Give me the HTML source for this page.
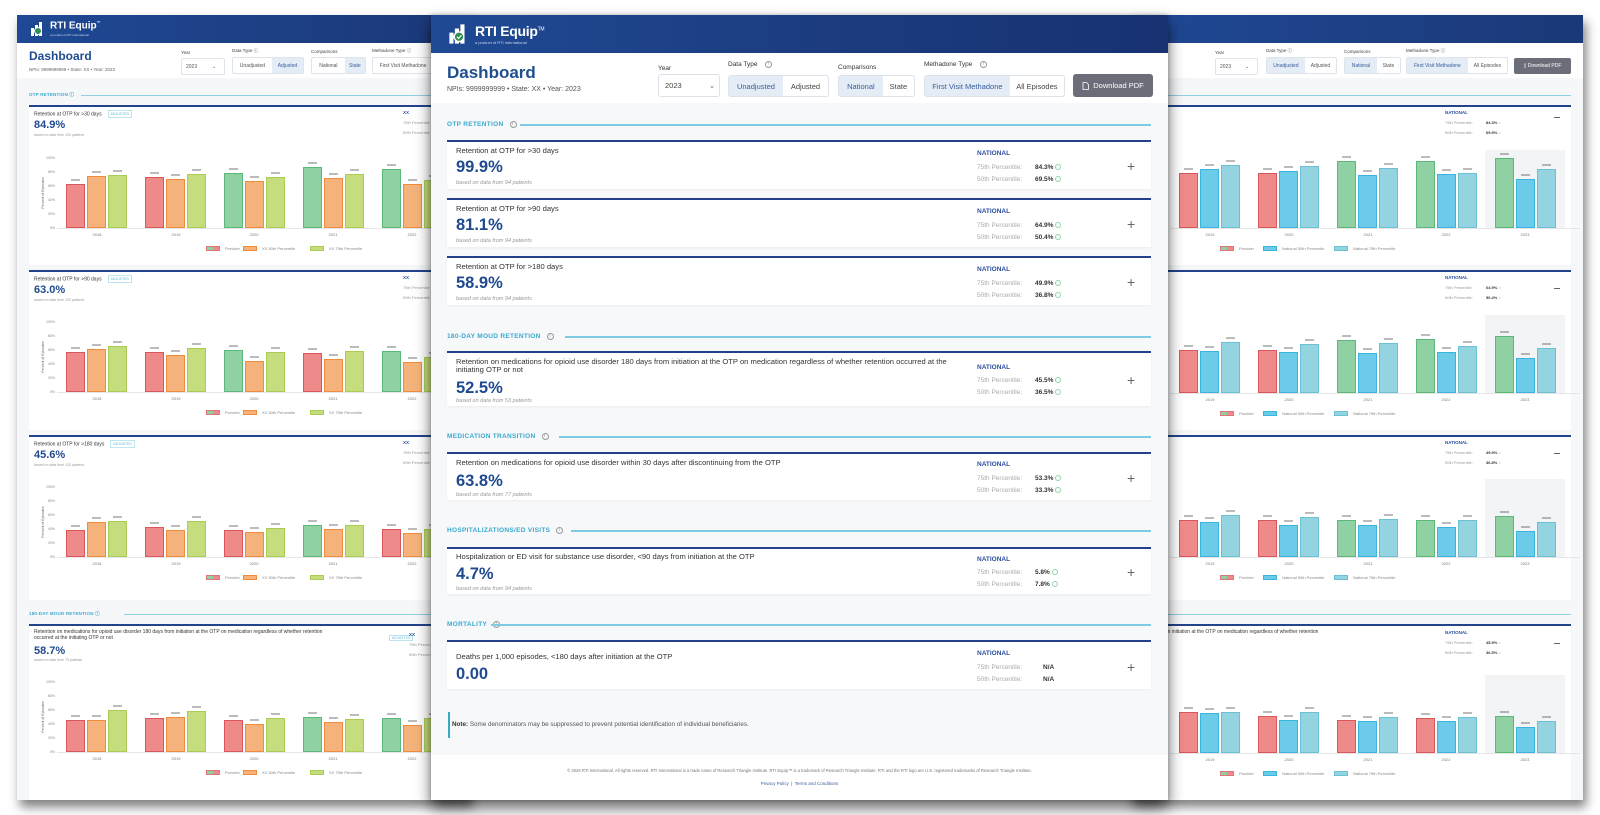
<!DOCTYPE html>
<html><head><meta charset="utf-8">
<style>
*{box-sizing:border-box;margin:0;padding:0}
body{width:1600px;height:815px;background:#fff;position:relative;overflow:hidden;font-family:"Liberation Sans",sans-serif;color:#333}
.abs{position:absolute}
.bc{position:absolute;top:15px;width:453px;height:785px;background:#f5f7f9;box-shadow:3px 7px 10px rgba(0,0,0,.5);overflow:hidden}
.hd{position:absolute;left:0;top:0;right:0;height:28px;background:linear-gradient(90deg,#1f4995,#1b3877)}
.wh{position:absolute;left:0;top:28px;right:0;height:35px;background:#fff}
.kc{position:absolute;left:12px;width:429px;background:#fff;border-top:2px solid #23438a}
.sl{position:absolute;font-size:4.5px;font-weight:bold;color:#3aaad0;letter-spacing:.2px;white-space:nowrap}
.ln{position:absolute;height:1px;background:#8fd0e3}
.yr{position:absolute;font-size:4px;color:#777;transform:translateX(-50%);white-space:nowrap}
.bar{position:absolute;width:19px;border:1px solid}
.lg{position:absolute;font-size:4px;color:#888;white-space:nowrap}
.sw{display:inline-block;width:14px;height:5px;vertical-align:middle;margin-right:5px;border:1px solid}
.tt{position:absolute;font-size:5px;color:#333;white-space:nowrap;line-height:6px}
.vv{position:absolute;font-size:11px;font-weight:bold;color:#1f4a8f;line-height:12px}
.ss{position:absolute;font-size:3.5px;color:#999;font-style:italic;white-space:nowrap}
.tg{display:inline-block;border:1px solid #bfe3ef;color:#5bb9d9;font-size:3.5px;padding:0 2px;margin-left:6px;vertical-align:middle}
.sm{position:absolute;font-size:4px;color:#999;white-space:nowrap}
.smb{position:absolute;font-size:4px;color:#333;font-weight:bold;white-space:nowrap}
.nat{position:absolute;font-size:4.5px;color:#2d4f9e;font-weight:bold}
.ctl{position:absolute;height:17px;border:1px solid #dfe3ea;border-radius:2px;background:#fff;display:flex;font-size:5px;color:#555}
.ctl span{display:flex;align-items:center;justify-content:center;height:100%}
.hi{background:#e4ecf6;color:#3a5d9c}
.cl{position:absolute;font-size:4.5px;color:#444;white-space:nowrap}
.ax{position:absolute;font-size:3.5px;color:#888;text-align:right;width:12px}
#C{position:absolute;left:431px;top:15px;width:737px;height:785px;background:#f6f8fa;box-shadow:0 8px 14px rgba(0,0,0,.6),0 0 4px rgba(0,0,0,.2);z-index:5;overflow:hidden}
#C .hdr{position:absolute;left:0;top:0;width:737px;height:38px;background:linear-gradient(90deg,#1f4a94,#1b3a7c 60%,#183272)}
#C .wt{position:absolute;left:0;top:38px;width:737px;height:50px;background:#fff}
.lab{position:absolute;font-size:6.5px;color:#333;white-space:nowrap;line-height:8px}
.seg{position:absolute;top:60px;height:22px;border:1px solid #dde2ea;border-radius:3px;background:#fff;display:flex;font-size:7.5px;color:#444;overflow:hidden}
.seg span{display:flex;align-items:center;justify-content:center;height:100%}
.sec{position:absolute;left:16px;font-size:6.5px;font-weight:bold;color:#3aa9cf;letter-spacing:.3px;white-space:nowrap;line-height:8px}
.sln{position:absolute;height:1.5px;background:#7fcbe2;right:17px}
.cc{position:absolute;left:16px;width:704px;background:#fff;border-top:2.5px solid #22418a;box-shadow:0 1px 2px rgba(0,0,0,.05)}
.ct{position:absolute;left:9px;font-size:7.6px;color:#333;line-height:8px;white-space:nowrap}
.cv{position:absolute;left:9px;font-size:16.5px;font-weight:bold;color:#1f4a8f;line-height:16px}
.cs{position:absolute;left:9px;font-size:5.5px;color:#999;font-style:italic;line-height:6px;white-space:nowrap}
.cn{position:absolute;left:530px;font-size:6.5px;font-weight:bold;color:#2d4f9e;line-height:8px}
.cp{position:absolute;left:530px;font-size:6.5px;color:#aaa;line-height:8px;white-space:nowrap}
.cpv{position:absolute;left:588px;font-size:6.5px;font-weight:bold;color:#333;line-height:8px;white-space:nowrap}
.ck{display:inline-block;width:6px;height:6px;border:1px solid #8fd4a5;border-radius:50%;margin-left:2px;vertical-align:-1px}
.pl{position:absolute;left:680px;font-size:14px;color:#666;line-height:14px;font-weight:300}
.ii{display:inline-block;width:7px;height:7px;border:1px solid #999;border-radius:50%;font-size:5px;line-height:5px;text-align:center;color:#999;margin-left:6px;font-weight:normal;vertical-align:middle}
</style></head><body>

<div class="bc" id="L" style="left:17px">
 <div class="hd"></div>
 <svg class="abs" style="left:13px;top:6px" width="16" height="16" viewBox="0 0 16 16"><rect x="1" y="7" width="3" height="8" fill="#fff"/><rect x="5" y="4" width="3" height="11" fill="#fff"/><rect x="9" y="1" width="3" height="14" fill="#fff"/><circle cx="8" cy="10" r="3.5" fill="#2f8f4e" stroke="#fff" stroke-width="1"/></svg>
 <div class="abs" style="left:33px;top:5px;color:#fff;font-size:10px;font-weight:bold">RTI Equip<sup style="font-size:4px">™</sup></div>
 <div class="abs" style="left:33px;top:18px;color:#cdd8ee;font-size:3px">a product of RTI International</div>
 <div class="wh"></div>
 <div class="abs" style="left:12px;top:34px;font-size:12px;font-weight:bold;color:#1f4a8f">Dashboard</div>
 <div class="abs" style="left:12px;top:52px;font-size:4.5px;color:#666">NPIs: 9999999999 • State: XX • Year: 2023</div>
 <div class="cl" style="left:164px;top:35px">Year</div>
 <div class="ctl" style="left:164px;top:43px;width:44px"><span style="width:30px;justify-content:flex-start;padding-left:4px">2023</span><span>⌄</span></div>
 <div class="cl" style="left:215px;top:33px">Data Type ⓘ</div>
 <div class="ctl" style="left:215px;top:42px;width:72px"><span style="width:40px">Unadjusted</span><span class="hi" style="width:32px">Adjusted</span></div>
 <div class="cl" style="left:294px;top:34px">Comparisons</div>
 <div class="ctl" style="left:294px;top:42px;width:55px"><span style="width:34px">National</span><span class="hi" style="width:21px">State</span></div>
 <div class="cl" style="left:355px;top:33px">Methadone Type ⓘ</div>
 <div class="ctl" style="left:355px;top:42px;width:100px"><span style="width:60px">First Visit Methadone</span></div>
 <div class="sl" style="left:12px;top:77px">OTP RETENTION ⓘ</div>
 <div class="ln" style="left:64px;right:0;top:80px"></div>

 <div class="kc" style="top:90px;height:160px"></div>
 <div class="tt" style="left:17px;top:95px">Retention at OTP for &gt;30 days<span class="tg">ADJUSTED</span></div>
 <div class="vv" style="left:17px;top:104px">84.9%</div>
 <div class="ss" style="left:17px;top:118px">based on data from 125 patients</div>
 <div class="nat" style="left:386px;top:95px">XX</div><div class="sm" style="left:386px;top:105px">75th Percentile</div><div class="sm" style="left:386px;top:115px">50th Percentile</div>

 <div class="kc" style="top:255px;height:160px"></div>
 <div class="tt" style="left:17px;top:260px">Retention at OTP for &gt;90 days<span class="tg">ADJUSTED</span></div>
 <div class="vv" style="left:17px;top:269px">63.0%</div>
 <div class="ss" style="left:17px;top:283px">based on data from 125 patients</div>
 <div class="nat" style="left:386px;top:260px">XX</div><div class="sm" style="left:386px;top:270px">75th Percentile</div><div class="sm" style="left:386px;top:280px">50th Percentile</div>

 <div class="kc" style="top:420px;height:165px"></div>
 <div class="tt" style="left:17px;top:425px">Retention at OTP for &gt;180 days<span class="tg">ADJUSTED</span></div>
 <div class="vv" style="left:17px;top:434px">45.6%</div>
 <div class="ss" style="left:17px;top:448px">based on data from 125 patients</div>
 <div class="nat" style="left:386px;top:425px">XX</div><div class="sm" style="left:386px;top:435px">75th Percentile</div><div class="sm" style="left:386px;top:445px">50th Percentile</div>

 <div class="sl" style="left:12px;top:596px">180-DAY MOUD RETENTION ⓘ</div>
 <div class="ln" style="left:107px;right:0;top:599px"></div>
 <div class="kc" style="top:609px;height:176px"></div>
 <div class="tt" style="left:17px;top:614px">Retention on medications for opioid use disorder 180 days from initiation at the OTP on medication regardless of whether retention<br>occurred at the initiating OTP or not</div>
 <div class="abs" style="left:366px;top:614px"><span class="tg">ADJUSTED</span></div>
 <div class="vv" style="left:17px;top:630px">58.7%</div>
 <div class="ss" style="left:17px;top:643px">based on data from 75 patients</div>
 <div class="nat" style="left:392px;top:617px">XX</div><div class="sm" style="left:392px;top:627px">75th Percentile</div><div class="sm" style="left:392px;top:637px">50th Percentile</div>

 <div id="lc1" class="abs" style="left:0;top:143px;width:453px;height:100px">
  <div class="ax" style="left:26px;top:-2px">100%</div><div class="ax" style="left:26px;top:12px">80%</div><div class="ax" style="left:26px;top:26px">60%</div><div class="ax" style="left:26px;top:40px">40%</div><div class="ax" style="left:26px;top:54px">20%</div><div class="ax" style="left:26px;top:68px">0%</div>
  <div class="abs" style="left:6px;top:33px;font-size:3.5px;color:#666;transform:rotate(-90deg);white-space:nowrap;width:40px;text-align:center">Percent of Episodes</div>
  <div class="yr" style="left:80px;top:74px">2018</div><div class="yr" style="left:159px;top:74px">2019</div><div class="yr" style="left:237px;top:74px">2020</div><div class="yr" style="left:316px;top:74px">2021</div><div class="yr" style="left:395px;top:74px">2022</div>
  <div class="lg" style="left:189px;top:88px"><i class="sw" style="background:linear-gradient(90deg,#8fd1a3 50%,#ee8a8a 50%);border-color:#d77"></i>Provider</div>
  <div class="lg" style="left:226px;top:88px"><i class="sw" style="background:#f5b27a;border-color:#f08c3c"></i>XX 50th Percentile</div>
  <div class="lg" style="left:293px;top:88px"><i class="sw" style="background:#c5dd7c;border-color:#a8cc55"></i>XX 75th Percentile</div>
 </div>
 <div id="lc2" class="abs" style="left:0;top:307px;width:453px;height:100px">
  <div class="ax" style="left:26px;top:-2px">100%</div><div class="ax" style="left:26px;top:12px">80%</div><div class="ax" style="left:26px;top:26px">60%</div><div class="ax" style="left:26px;top:40px">40%</div><div class="ax" style="left:26px;top:54px">20%</div><div class="ax" style="left:26px;top:68px">0%</div>
  <div class="abs" style="left:6px;top:33px;font-size:3.5px;color:#666;transform:rotate(-90deg);white-space:nowrap;width:40px;text-align:center">Percent of Episodes</div>
  <div class="yr" style="left:80px;top:74px">2018</div><div class="yr" style="left:159px;top:74px">2019</div><div class="yr" style="left:237px;top:74px">2020</div><div class="yr" style="left:316px;top:74px">2021</div><div class="yr" style="left:395px;top:74px">2022</div>
  <div class="lg" style="left:189px;top:88px"><i class="sw" style="background:linear-gradient(90deg,#8fd1a3 50%,#ee8a8a 50%);border-color:#d77"></i>Provider</div>
  <div class="lg" style="left:226px;top:88px"><i class="sw" style="background:#f5b27a;border-color:#f08c3c"></i>XX 50th Percentile</div>
  <div class="lg" style="left:293px;top:88px"><i class="sw" style="background:#c5dd7c;border-color:#a8cc55"></i>XX 75th Percentile</div>
 </div>
 <div id="lc3" class="abs" style="left:0;top:472px;width:453px;height:100px">
  <div class="ax" style="left:26px;top:-2px">100%</div><div class="ax" style="left:26px;top:12px">80%</div><div class="ax" style="left:26px;top:26px">60%</div><div class="ax" style="left:26px;top:40px">40%</div><div class="ax" style="left:26px;top:54px">20%</div><div class="ax" style="left:26px;top:68px">0%</div>
  <div class="abs" style="left:6px;top:33px;font-size:3.5px;color:#666;transform:rotate(-90deg);white-space:nowrap;width:40px;text-align:center">Percent of Episodes</div>
  <div class="yr" style="left:80px;top:74px">2018</div><div class="yr" style="left:159px;top:74px">2019</div><div class="yr" style="left:237px;top:74px">2020</div><div class="yr" style="left:316px;top:74px">2021</div><div class="yr" style="left:395px;top:74px">2022</div>
  <div class="lg" style="left:189px;top:88px"><i class="sw" style="background:linear-gradient(90deg,#8fd1a3 50%,#ee8a8a 50%);border-color:#d77"></i>Provider</div>
  <div class="lg" style="left:226px;top:88px"><i class="sw" style="background:#f5b27a;border-color:#f08c3c"></i>XX 50th Percentile</div>
  <div class="lg" style="left:293px;top:88px"><i class="sw" style="background:#c5dd7c;border-color:#a8cc55"></i>XX 75th Percentile</div>
 </div>
 <div id="lc4" class="abs" style="left:0;top:667px;width:453px;height:100px">
  <div class="ax" style="left:26px;top:-2px">100%</div><div class="ax" style="left:26px;top:12px">80%</div><div class="ax" style="left:26px;top:26px">60%</div><div class="ax" style="left:26px;top:40px">40%</div><div class="ax" style="left:26px;top:54px">20%</div><div class="ax" style="left:26px;top:68px">0%</div>
  <div class="abs" style="left:6px;top:33px;font-size:3.5px;color:#666;transform:rotate(-90deg);white-space:nowrap;width:40px;text-align:center">Percent of Episodes</div>
  <div class="yr" style="left:80px;top:74px">2018</div><div class="yr" style="left:159px;top:74px">2019</div><div class="yr" style="left:237px;top:74px">2020</div><div class="yr" style="left:316px;top:74px">2021</div><div class="yr" style="left:395px;top:74px">2022</div>
  <div class="lg" style="left:189px;top:88px"><i class="sw" style="background:linear-gradient(90deg,#8fd1a3 50%,#ee8a8a 50%);border-color:#d77"></i>Provider</div>
  <div class="lg" style="left:226px;top:88px"><i class="sw" style="background:#f5b27a;border-color:#f08c3c"></i>XX 50th Percentile</div>
  <div class="lg" style="left:293px;top:88px"><i class="sw" style="background:#c5dd7c;border-color:#a8cc55"></i>XX 75th Percentile</div>
 </div>
</div>

<div class="bc" id="R" style="left:1130px">
 <div class="hd"></div>
 <div class="wh"></div>
 <div class="cl" style="left:85px;top:35px">Year</div>
 <div class="ctl" style="left:85px;top:43px;width:43px"><span style="width:29px;justify-content:flex-start;padding-left:4px">2023</span><span>⌄</span></div>
 <div class="cl" style="left:136px;top:33px">Data Type ⓘ</div>
 <div class="ctl" style="left:136px;top:42px;width:71px"><span class="hi" style="width:39px">Unadjusted</span><span style="width:32px">Adjusted</span></div>
 <div class="cl" style="left:214px;top:34px">Comparisons</div>
 <div class="ctl" style="left:214px;top:42px;width:57px"><span class="hi" style="width:33px">National</span><span style="width:24px">State</span></div>
 <div class="cl" style="left:276px;top:33px">Methadone Type ⓘ</div>
 <div class="ctl" style="left:276px;top:42px;width:102px"><span class="hi" style="width:62px">First Visit Methadone</span><span style="width:40px">All Episodes</span></div>
 <div class="abs" style="left:384px;top:43px;width:57px;height:16px;background:#6b6e78;border-radius:2px;color:#fff;font-size:5px;display:flex;align-items:center;justify-content:center">▯ Download PDF</div>
 <div class="ln" style="left:0;width:441px;top:80px"></div>

 <div class="kc" style="top:90px;height:160px"></div>
 <div class="kc" style="top:255px;height:160px"></div>
 <div class="kc" style="top:420px;height:165px"></div>
 <div class="ln" style="left:0;width:441px;top:599px"></div>
 <div class="kc" style="top:609px;height:176px"></div>
 <div class="tt" style="left:-100px;top:614px">Retention on medications for opioid use disorder 180 days from initiation at the OTP on medication regardless of whether retention</div>

 <div class="nat" style="left:315px;top:95px">NATIONAL</div><div class="sm" style="left:315px;top:105px">75th Percentile:</div><div class="smb" style="left:356px;top:105px">84.3% ◌</div><div class="sm" style="left:315px;top:115px">50th Percentile:</div><div class="smb" style="left:356px;top:115px">69.5% ◌</div><div class="abs" style="left:424px;top:102px;width:6px;height:1px;background:#666"></div>
 <div class="nat" style="left:315px;top:260px">NATIONAL</div><div class="sm" style="left:315px;top:270px">75th Percentile:</div><div class="smb" style="left:356px;top:270px">64.9% ◌</div><div class="sm" style="left:315px;top:280px">50th Percentile:</div><div class="smb" style="left:356px;top:280px">50.4% ◌</div><div class="abs" style="left:424px;top:273px;width:6px;height:1px;background:#666"></div>
 <div class="nat" style="left:315px;top:425px">NATIONAL</div><div class="sm" style="left:315px;top:435px">75th Percentile:</div><div class="smb" style="left:356px;top:435px">49.9% ◌</div><div class="sm" style="left:315px;top:445px">50th Percentile:</div><div class="smb" style="left:356px;top:445px">36.8% ◌</div><div class="abs" style="left:424px;top:438px;width:6px;height:1px;background:#666"></div>
 <div class="nat" style="left:315px;top:615px">NATIONAL</div><div class="sm" style="left:315px;top:625px">75th Percentile:</div><div class="smb" style="left:356px;top:625px">45.5% ◌</div><div class="sm" style="left:315px;top:635px">50th Percentile:</div><div class="smb" style="left:356px;top:635px">36.5% ◌</div><div class="abs" style="left:424px;top:628px;width:6px;height:1px;background:#666"></div>

 <div id="rc1" class="abs" style="left:0;top:143px;width:453px;height:100px">
  <div class="abs" style="left:355px;top:-8px;width:80px;height:78px;background:#f2f4f5"></div>
  <div class="yr" style="left:80px;top:74px">2019</div><div class="yr" style="left:159px;top:74px">2020</div><div class="yr" style="left:238px;top:74px">2021</div><div class="yr" style="left:316px;top:74px">2022</div><div class="yr" style="left:395px;top:74px">2023</div>
  <div class="lg" style="left:90px;top:88px"><i class="sw" style="background:linear-gradient(90deg,#8fd1a3 50%,#ee8a8a 50%);border-color:#d77"></i>Provider</div>
  <div class="lg" style="left:133px;top:88px"><i class="sw" style="background:#6ccbe9;border-color:#3ab4dc"></i>National 50th Percentile</div>
  <div class="lg" style="left:204px;top:88px"><i class="sw" style="background:#94d3e0;border-color:#6cc0d4"></i>National 75th Percentile</div>
 </div>
 <div id="rc2" class="abs" style="left:0;top:308px;width:453px;height:100px">
  <div class="abs" style="left:355px;top:-8px;width:80px;height:78px;background:#f2f4f5"></div>
  <div class="yr" style="left:80px;top:74px">2019</div><div class="yr" style="left:159px;top:74px">2020</div><div class="yr" style="left:238px;top:74px">2021</div><div class="yr" style="left:316px;top:74px">2022</div><div class="yr" style="left:395px;top:74px">2023</div>
  <div class="lg" style="left:90px;top:88px"><i class="sw" style="background:linear-gradient(90deg,#8fd1a3 50%,#ee8a8a 50%);border-color:#d77"></i>Provider</div>
  <div class="lg" style="left:133px;top:88px"><i class="sw" style="background:#6ccbe9;border-color:#3ab4dc"></i>National 50th Percentile</div>
  <div class="lg" style="left:204px;top:88px"><i class="sw" style="background:#94d3e0;border-color:#6cc0d4"></i>National 75th Percentile</div>
 </div>
 <div id="rc3" class="abs" style="left:0;top:472px;width:453px;height:100px">
  <div class="abs" style="left:355px;top:-8px;width:80px;height:78px;background:#f2f4f5"></div>
  <div class="yr" style="left:80px;top:74px">2019</div><div class="yr" style="left:159px;top:74px">2020</div><div class="yr" style="left:238px;top:74px">2021</div><div class="yr" style="left:316px;top:74px">2022</div><div class="yr" style="left:395px;top:74px">2023</div>
  <div class="lg" style="left:90px;top:88px"><i class="sw" style="background:linear-gradient(90deg,#8fd1a3 50%,#ee8a8a 50%);border-color:#d77"></i>Provider</div>
  <div class="lg" style="left:133px;top:88px"><i class="sw" style="background:#6ccbe9;border-color:#3ab4dc"></i>National 50th Percentile</div>
  <div class="lg" style="left:204px;top:88px"><i class="sw" style="background:#94d3e0;border-color:#6cc0d4"></i>National 75th Percentile</div>
 </div>
 <div id="rc4" class="abs" style="left:0;top:668px;width:453px;height:100px">
  <div class="abs" style="left:355px;top:-8px;width:80px;height:78px;background:#f2f4f5"></div>
  <div class="yr" style="left:80px;top:74px">2019</div><div class="yr" style="left:159px;top:74px">2020</div><div class="yr" style="left:238px;top:74px">2021</div><div class="yr" style="left:316px;top:74px">2022</div><div class="yr" style="left:395px;top:74px">2023</div>
  <div class="lg" style="left:90px;top:88px"><i class="sw" style="background:linear-gradient(90deg,#8fd1a3 50%,#ee8a8a 50%);border-color:#d77"></i>Provider</div>
  <div class="lg" style="left:133px;top:88px"><i class="sw" style="background:#6ccbe9;border-color:#3ab4dc"></i>National 50th Percentile</div>
  <div class="lg" style="left:204px;top:88px"><i class="sw" style="background:#94d3e0;border-color:#6cc0d4"></i>National 75th Percentile</div>
 </div>
</div>

<div id="C">
 <div class="hdr"></div>
 <svg class="abs" style="left:17px;top:8px" width="22" height="22" viewBox="0 0 16 16"><rect x="1" y="7" width="3" height="8" fill="#fff"/><rect x="5" y="4" width="3" height="11" fill="#fff"/><rect x="9" y="1" width="3" height="14" fill="#fff"/><circle cx="8" cy="10" r="3.5" fill="#2f8f4e" stroke="#fff" stroke-width="1"/><path d="M6.5 10l1.2 1.2 2-2.2" stroke="#fff" stroke-width=".8" fill="none"/></svg>
 <div class="abs" style="left:44px;top:8px;color:#fff;font-size:14px;font-weight:bold;letter-spacing:-.3px">RTI Equip<sup style="font-size:5px;font-weight:normal">TM</sup></div>
 <div class="abs" style="left:44px;top:25px;color:#c9d5ec;font-size:4px">a product of RTI International</div>
 <div class="wt"></div>
 <div class="abs" style="left:16px;top:48px;font-size:17px;font-weight:bold;color:#1f4e8f">Dashboard</div>
 <div class="abs" style="left:16px;top:71px;font-size:7px;color:#555">NPIs: 9999999999 • State: XX • Year: 2023</div>

 <div class="lab" style="left:227px;top:50px">Year</div>
 <div class="seg" style="left:227px;top:59px;width:62px;height:23px"><span style="width:46px;justify-content:flex-start;padding-left:6px">2023</span><span style="width:14px;color:#666">⌄</span></div>
 <div class="lab" style="left:297px;top:46px">Data Type <span class="ii">i</span></div>
 <div class="seg" style="left:297px;width:101px"><span class="hi" style="width:55px">Unadjusted</span><span style="width:46px">Adjusted</span></div>
 <div class="lab" style="left:407px;top:49px">Comparisons</div>
 <div class="seg" style="left:407px;width:77px"><span class="hi" style="width:45px">National</span><span style="width:32px">State</span></div>
 <div class="lab" style="left:493px;top:46px">Methadone Type <span class="ii">i</span></div>
 <div class="seg" style="left:493px;width:141px"><span class="hi" style="width:86px">First Visit Methadone</span><span style="width:55px">All Episodes</span></div>
 <div class="abs" style="left:642px;top:59px;width:80px;height:23px;background:#6b6e78;border-radius:3px;color:#fff;font-size:7.5px;display:flex;align-items:center;justify-content:center"><svg width="7" height="8" viewBox="0 0 7 8" style="margin-right:4px"><path d="M1 .5h3.5L6.5 2.5v5H1z" fill="none" stroke="#fff" stroke-width=".8"/></svg>Download PDF</div>

 <div class="sec" style="top:106px">OTP RETENTION<span class="ii">i</span></div>
 <div class="sln" style="left:89px;top:109px"></div>
 <div class="cc" style="top:125px;height:49px">
  <div class="ct" style="top:5px">Retention at OTP for &gt;30 days</div><div class="cv" style="top:17px">99.9%</div><div class="cs" style="top:38px">based on data from 94 patients</div>
  <div class="cn" style="top:8px">NATIONAL</div><div class="cp" style="top:22px">75th Percentile:</div><div class="cpv" style="top:22px">84.3%<i class="ck"></i></div><div class="cp" style="top:34px">50th Percentile:</div><div class="cpv" style="top:34px">69.5%<i class="ck"></i></div><div class="pl" style="top:17px">+</div>
 </div>
 <div class="cc" style="top:183px;height:49px">
  <div class="ct" style="top:5px">Retention at OTP for &gt;90 days</div><div class="cv" style="top:17px">81.1%</div><div class="cs" style="top:38px">based on data from 94 patients</div>
  <div class="cn" style="top:8px">NATIONAL</div><div class="cp" style="top:22px">75th Percentile:</div><div class="cpv" style="top:22px">64.9%<i class="ck"></i></div><div class="cp" style="top:34px">50th Percentile:</div><div class="cpv" style="top:34px">50.4%<i class="ck"></i></div><div class="pl" style="top:17px">+</div>
 </div>
 <div class="cc" style="top:241px;height:49px">
  <div class="ct" style="top:5px">Retention at OTP for &gt;180 days</div><div class="cv" style="top:17px">58.9%</div><div class="cs" style="top:38px">based on data from 94 patients</div>
  <div class="cn" style="top:8px">NATIONAL</div><div class="cp" style="top:22px">75th Percentile:</div><div class="cpv" style="top:22px">49.9%<i class="ck"></i></div><div class="cp" style="top:34px">50th Percentile:</div><div class="cpv" style="top:34px">36.8%<i class="ck"></i></div><div class="pl" style="top:17px">+</div>
 </div>

 <div class="sec" style="top:318px">180-DAY MOUD RETENTION<span class="ii">i</span></div>
 <div class="sln" style="left:134px;top:321px"></div>
 <div class="cc" style="top:336px;height:55px">
  <div class="ct" style="top:5px">Retention on medications for opioid use disorder 180 days from initiation at the OTP on medication regardless of whether retention occurred at the<br>initiating OTP or not</div>
  <div class="cv" style="top:27px">52.5%</div><div class="cs" style="top:45px">based on data from 53 patients</div>
  <div class="cn" style="top:11px">NATIONAL</div><div class="cp" style="top:24px">75th Percentile:</div><div class="cpv" style="top:24px">45.5%<i class="ck"></i></div><div class="cp" style="top:36px">50th Percentile:</div><div class="cpv" style="top:36px">36.5%<i class="ck"></i></div><div class="pl" style="top:20px">+</div>
 </div>

 <div class="sec" style="top:418px">MEDICATION TRANSITION<span class="ii">i</span></div>
 <div class="sln" style="left:128px;top:421px"></div>
 <div class="cc" style="top:437px;height:48px">
  <div class="ct" style="top:5px">Retention on medications for opioid use disorder within 30 days after discontinuing from the OTP</div>
  <div class="cv" style="top:19px">63.8%</div><div class="cs" style="top:38px">based on data from 77 patients</div>
  <div class="cn" style="top:7px">NATIONAL</div><div class="cp" style="top:21px">75th Percentile:</div><div class="cpv" style="top:21px">53.3%<i class="ck"></i></div><div class="cp" style="top:33px">50th Percentile:</div><div class="cpv" style="top:33px">33.3%<i class="ck"></i></div><div class="pl" style="top:17px">+</div>
 </div>

 <div class="sec" style="top:512px">HOSPITALIZATIONS/ED VISITS<span class="ii">i</span></div>
 <div class="sln" style="left:140px;top:515px"></div>
 <div class="cc" style="top:532px;height:47px">
  <div class="ct" style="top:4px">Hospitalization or ED visit for substance use disorder, &lt;90 days from initiation at the OTP</div>
  <div class="cv" style="top:17px">4.7%</div><div class="cs" style="top:37px">based on data from 94 patients</div>
  <div class="cn" style="top:7px">NATIONAL</div><div class="cp" style="top:20px">75th Percentile:</div><div class="cpv" style="top:20px">5.8%<i class="ck"></i></div><div class="cp" style="top:32px">50th Percentile:</div><div class="cpv" style="top:32px">7.8%<i class="ck"></i></div><div class="pl" style="top:16px">+</div>
 </div>

 <div class="sec" style="top:606px">MORTALITY<span class="ii">i</span></div>
 <div class="sln" style="left:60px;top:609px"></div>
 <div class="cc" style="top:625px;height:49px">
  <div class="ct" style="top:11px">Deaths per 1,000 episodes, &lt;180 days after initiation at the OTP</div>
  <div class="cv" style="top:24px">0.00</div>
  <div class="cn" style="top:8px">NATIONAL</div><div class="cp" style="top:22px">75th Percentile:</div><div class="cpv" style="top:22px;left:596px">N/A</div><div class="cp" style="top:34px">50th Percentile:</div><div class="cpv" style="top:34px;left:596px">N/A</div><div class="pl" style="top:18px">+</div>
 </div>

 <div class="abs" style="left:17px;top:697px;width:2px;height:26px;background:#3aa9c4"></div>
 <div class="abs" style="left:21px;top:706px;font-size:6.3px;color:#555;white-space:nowrap"><b style="color:#333">Note:</b> Some denominators may be suppressed to prevent potential identification of individual beneficiaries.</div>

 <div class="abs" style="left:0;top:740px;width:737px;height:45px;background:#fff"></div>
 <div class="abs" style="left:0;top:753px;width:737px;text-align:center;font-size:4.2px;color:#777;white-space:nowrap">© 2026 RTI International. All rights reserved. RTI International is a trade name of Research Triangle Institute. RTI Equip™ is a trademark of Research Triangle Institute. RTI and the RTI logo are U.S. registered trademarks of Research Triangle Institute.</div>
 <div class="abs" style="left:0;top:766px;width:737px;text-align:center;font-size:4.5px;color:#3a5d9c">Privacy Policy &nbsp;|&nbsp; Terms and Conditions</div>
</div>

<script>
var RED=['#ee8a8a','#d9575a'],GRN=['#8fd1a3','#5cb77a'],OR=['#f5b27a','#f08c3c'],YG=['#c5dd7c','#a8cc55'],BL=['#6ccbe9','#3ab4dc'],TE=['#94d3e0','#6cc0d4'];
var D={
lc1:[[63.3,73.9,75.0],[72.7,69.9,76.9],[78.3,67.2,72.4],[87.8,71.3,76.8],[84.8,63.3,68],'rrggg','L'],
lc2:[[56.7,61.9,65.1],[56.5,53.3,63.4],[60.5,45,57.8],[56.2,47.6,59.1],[58.6,42.8,50],'rrgrg','L'],
lc3:[[38.6,49.6,51.3],[42.6,38.8,51.8],[38.1,35.3,41.6],[46.3,39.3,46.3],[39.3,33.8,40],'rrrgr','L'],
lc4:[[46.1,45.1,59.8],[48.7,49.4,58.9],[45.7,39.4,48.9],[49.4,42.3,47.3],[48.3,38.7,48],'rrrgg','L'],
rc1:[[78.8,84.5,90.3],[78,81.5,88.9],[96,75.1,86],[95.7,77.7,78.8],[99.9,69.5,84.3],'rrggg','R'],
rc2:[[62,59.7,72.9],[61.9,58.9,70.6],[75.8,56.7,71.3],[76.9,58.2,67.2],[81.1,50.4,64.9],'rrggg','R'],
rc3:[[53.1,49.3,59.4],[52.9,46.1,57.2],[53.3,45.4,54.9],[53.4,42.9,52.9],[58.9,36.8,49.9],'rrggg','R'],
rc4:[[58,56.8,57.9],[52.9,47.7,58.3],[46.7,45.3,51],[49.8,46.2,51.1],[52.5,36.5,45.5],'rrrrg','R']};
for(var k in D){var el=document.getElementById(k),d=D[k];
 var base=document.createElement('div');base.className='abs';base.style.cssText='left:40px;top:70px;width:410px;height:1px;background:#e6e6e6';el.appendChild(base);
 for(var i=0;i<5;i++){var c=80+79*i;var cols=[d[5][i]=='r'?RED:GRN,d[6]=='L'?OR:BL,d[6]=='L'?YG:TE];
  for(var j=0;j<3;j++){var h=Math.round(d[i][j]*0.7);var b=document.createElement('div');b.className='bar';
   b.style.left=(c-31+21*j)+'px';b.style.top=(70-h)+'px';b.style.height=h+'px';b.style.background=cols[j][0];b.style.borderColor=cols[j][1];el.appendChild(b);
   var t=document.createElement('div');t.className='abs';t.style.cssText='left:'+(c-26+21*j)+'px;top:'+(65-h)+'px;width:9px;height:1.5px;background:#555;opacity:.4';el.appendChild(t);}}}
</script>
</body></html>
